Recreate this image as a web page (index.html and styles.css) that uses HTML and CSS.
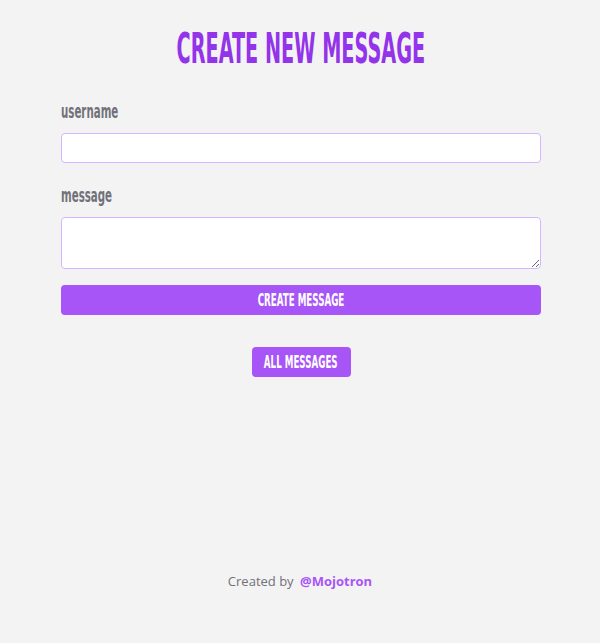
FILE: index.html
```html
<!DOCTYPE html>
<html lang="en">
<head>
<meta charset="utf-8">
<title>Create New Message</title>
<link rel="stylesheet" href="styles.css">
</head>
<body>
<main class="page">
  <h1 class="title"><span class="squeeze squeeze-title">Create New Message</span></h1>
  <form class="form">
    <label class="label" for="username"><span class="squeeze">username</span></label>
    <input class="input" id="username" type="text">
    <label class="label" for="message"><span class="squeeze">message</span></label>
    <textarea class="textarea" id="message"></textarea>
    <button class="btn btn-wide" type="button"><span class="squeeze squeeze-btn">Create Message</span></button>
  </form>
  <div class="links">
    <a class="btn btn-small" href="#"><span class="squeeze squeeze-btn">All Messages</span></a>
  </div>
</main>
<footer class="footer">Created by <a class="author" href="#">@Mojotron</a></footer>
</body>
</html>
```
FILE: styles.css
```css
* { box-sizing: border-box; }
html, body { margin: 0; padding: 0; }
body {
  background: #f3f3f3;
  height: 643px;
  display: flex;
  flex-direction: column;
  font-family: "Liberation Sans", sans-serif;
}
.page {
  width: 480px;
  margin: 0 0 0 61px;
  flex: 1;
}
.squeeze {
  display: inline-block;
  white-space: nowrap;
  transform: scaleX(0.6);
}
.squeeze-title { transform: scaleX(0.51); }
.squeeze-btn { transform: scaleX(0.57); }
.title {
  margin: 28px 0 0;
  display: flex;
  justify-content: center;
  white-space: nowrap;
  font-family: "DejaVu Sans Condensed", "Liberation Sans", sans-serif;
  font-weight: 700;
  font-size: 42px;
  line-height: 42px;
  color: #9333ea;
  text-transform: uppercase;
}
.form {
  margin-top: 30px;
  display: flex;
  flex-direction: column;
}
.label {
  font-family: "DejaVu Sans Condensed", "Liberation Sans", sans-serif;
  font-weight: 700;
  font-size: 19px;
  line-height: 22px;
  color: #71717a;
  white-space: nowrap;
}
.label .squeeze { transform-origin: left center; }
.input {
  margin-top: 11px;
  height: 30px;
  border: 1px solid #d8b4fe;
  border-radius: 4px;
  background: #fff;
  margin-bottom: 21px;
}
.textarea {
  margin-top: 11px;
  height: 52px;
  border: 1px solid #d8b4fe;
  border-radius: 4px;
  background: #fff;
  resize: vertical;
}
.btn {
  background: #a855f7;
  color: #fff;
  border: 0;
  border-radius: 4px;
  height: 30px;
  font-family: "DejaVu Sans Condensed", "Liberation Sans", sans-serif;
  font-weight: 700;
  font-size: 17px;
  text-transform: uppercase;
  text-decoration: none;
  white-space: nowrap;
  display: flex;
  align-items: center;
  justify-content: center;
  padding: 0;
}
.btn-wide { margin-top: 16px; width: 100%; }
.links {
  margin-top: 32px;
  display: flex;
  justify-content: center;
}
.btn-small { width: 99px; }
.footer {
  text-align: center;
  font-family: "Open Sans", sans-serif;
  font-size: 13px;
  color: #71717a;
  padding-bottom: 53px;
}
.author {
  color: #a855f7;
  font-weight: 700;
  text-decoration: none;
  margin-left: 3px;
}
```
